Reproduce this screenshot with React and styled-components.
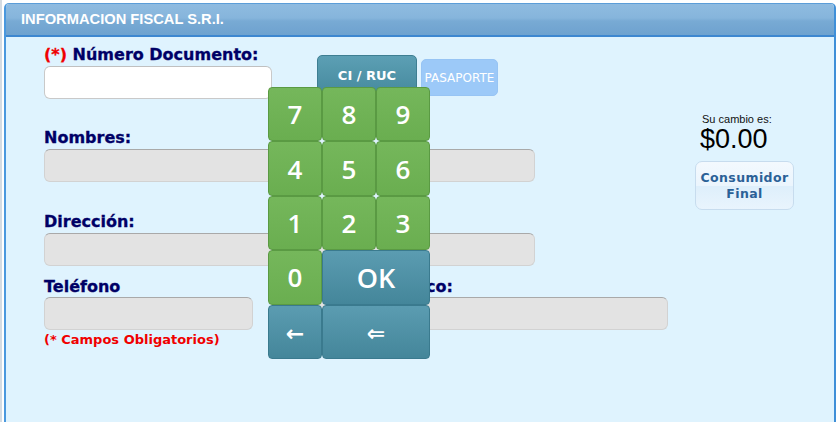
import React, { useState } from 'react'
import styled, { createGlobalStyle } from 'styled-components'

const GlobalStyle = createGlobalStyle`
	html, body {
		margin: 0;
		padding: 0;
		background: #fff;
		font-family: "DejaVu Sans", Verdana, sans-serif;
	}
	* { box-sizing: border-box; }
`

const Page = styled.div`
	min-height: 100vh;
	padding: 3px 0 0 2px;
	border-left: 2px solid #d4dbe2;
	display: flex;
`

const Panel = styled.div`
	flex: 1;
	display: flex;
	flex-direction: column;
	min-height: calc(100vh - 3px);
	background: #dff3fe;
	border: 1px solid #5b9dd8;
	border-left: 2px solid #4a98de;
	border-right: 2px solid #3f8fd8;
	border-bottom: none;
	border-radius: 5px 5px 0 0;
	overflow: hidden;
`

const Header = styled.div`
	height: 33px;
	display: flex;
	align-items: center;
	padding-left: 15px;
	background: linear-gradient(#8fbbe0 0%, #86b5dc 45%, #78aad4 55%, #6ea2cf 100%);
	border-bottom: 2px solid #3d87d0;
	color: #fff;
	font-family: "Liberation Sans", Arial, sans-serif;
	font-weight: bold;
	font-size: 14.7px;
	padding-bottom: 1px;
`

const Body = styled.div`
	position: relative;
	flex: 1;
	display: flex;
	padding-left: 38px;
`

const Form = styled.div`
	width: 624px;
	display: flex;
	flex-direction: column;
`

const Row = styled.div`
	display: flex;
	align-items: flex-start;
	margin-top: ${({ $top }) => $top}px;
`

const Field = styled.div`
	display: flex;
	flex-direction: column;
	width: ${({ $w }) => $w}px;
	margin-left: ${({ $ml }) => $ml || 0}px;
`

const Label = styled.label`
	font-size: 16px;
	line-height: 20px;
	font-weight: bold;
	color: #000066;
	margin-bottom: ${({ $mb }) => ($mb === undefined ? 1 : $mb)}px;
	white-space: nowrap;
	-webkit-text-stroke: 0.3px #000066;
	span { color: #f00000; -webkit-text-stroke: 0.3px #f00000; }
`

const Input = styled.input`
	height: 33px;
	width: 100%;
	border-radius: 6px;
	border: 1px solid ${({ $light }) => ($light ? '#c9c9c9' : '#d2d2d2')};
	border-top-color: ${({ $light }) => ($light ? '#c0c0c0' : '#a9a9a9')};
	background: ${({ $light }) => ($light ? '#fff' : '#e3e3e3')};
	outline: none;
	font-size: 14px;
	padding: 0 8px;
`

const Required = styled.div`
	margin-top: 2px;
	font-size: 13px;
	line-height: 16px;
	font-weight: bold;
	color: #f00000;
`

const DocButtons = styled.div`
	display: flex;
	align-items: flex-start;
	gap: 4px;
	margin-left: 45px;
	margin-top: 10px;
`

const DocButton = styled.button`
	font-family: "DejaVu Sans", Verdana, sans-serif;
	color: #fff;
	padding: 0;
	cursor: pointer;
	border-radius: 5px;
	${({ $active }) => $active ? `
		width: 100px;
		height: 40px;
		font-size: 13px;
		font-weight: bold;
		background: linear-gradient(#5c9fb4, #468a9e);
		border: 1px solid #3e7e92;
	` : `
		width: 77px;
		height: 37px;
		margin-top: 4px;
		font-size: 12px;
		background: #9cc9f8;
		border: 1px solid #97c4f4;
	`}
`

const Aside = styled.div`
	width: 100px;
	margin-left: 27px;
	margin-top: 76px;
	display: flex;
	flex-direction: column;
	font-family: "Liberation Sans", Arial, sans-serif;
`

const ChangeLabel = styled.div`
	font-size: 11px;
	line-height: 13px;
	padding-left: 7px;
	color: #111;
`

const ChangeValue = styled.div`
	font-size: 27px;
	line-height: 27px;
	padding-left: 5px;
	color: #000;
`

const FinalButton = styled.button`
	margin-top: 8px;
	width: 99px;
	height: 49px;
	border-radius: 7px;
	border: 1px solid #c7dcee;
	background: linear-gradient(#f3f9fe 0%, #ebf5fd 50%, #deeffb 52%, #e9f4fd 100%);
	color: #2b6197;
	font-family: "DejaVu Sans", Verdana, sans-serif;
	font-weight: bold;
	font-size: 12.5px;
	line-height: 16px;
	letter-spacing: 0.4px;
	padding: 0;
`

const Keypad = styled.div`
	position: absolute;
	left: 262px;
	top: 50px;
	display: grid;
	grid-template-columns: repeat(3, 54px);
	grid-auto-rows: 54.4px;
`

const Key = styled.button`
	grid-column: span ${({ $span }) => $span || 1};
	border-radius: 4px;
	padding: 0;
	color: #fff;
	font-family: "Open Sans", "DejaVu Sans", sans-serif;
	font-weight: 600;
	font-size: ${({ $size }) => $size || 26}px;
	cursor: pointer;
	background: ${({ $teal }) => $teal
		? 'linear-gradient(#5b9cb1, #44869a)'
		: 'linear-gradient(#75b75b, #6aae50)'};
	border: 1px solid ${({ $teal }) => ($teal ? '#3a7a8e' : '#5a9a43')};
`

const keys = [
	{ label: '7' }, { label: '8' }, { label: '9' },
	{ label: '4' }, { label: '5' }, { label: '6' },
	{ label: '1' }, { label: '2' }, { label: '3' },
	{ label: '0' }, { label: 'OK', span: 2, teal: true, size: 27 },
	{ label: '←', teal: true, size: 22 }, { label: '⇐', span: 2, teal: true, size: 22 },
]

export default () => {
	const [ doc, setDoc ] = useState('')
	const addDigit = key => {
		if ( /^\d$/.test(key) ) setDoc(doc + key)
		if ( key === '←' ) setDoc(doc.slice(0, -1))
		if ( key === '⇐' ) setDoc('')
	}
	return (
		<>
			<GlobalStyle />
			<Page>
				<Panel>
					<Header>INFORMACION FISCAL S.R.I.</Header>
					<Body>
						<Form>
							<Row $top={8}>
								<Field $w={228}>
									<Label><span>(*)</span> Número Documento:</Label>
									<Input $light value={doc} onChange={e => setDoc(e.target.value)} />
								</Field>
								<DocButtons>
									<DocButton $active>CI / RUC</DocButton>
									<DocButton>PASAPORTE</DocButton>
								</DocButtons>
							</Row>
							<Row $top={29}>
								<Field $w={491}>
									<Label>Nombres:</Label>
									<Input />
								</Field>
							</Row>
							<Row $top={30}>
								<Field $w={491}>
									<Label>Dirección:</Label>
									<Input />
								</Field>
							</Row>
							<Row $top={11}>
								<Field $w={209}>
									<Label $mb={0}>Teléfono</Label>
									<Input />
									<Required>(* Campos Obligatorios)</Required>
								</Field>
								<Field $w={388} $ml={27}>
									<Label $mb={0}>Correo Electrónico:</Label>
									<Input />
								</Field>
							</Row>
						</Form>
						<Aside>
							<ChangeLabel>Su cambio es:</ChangeLabel>
							<ChangeValue>$0.00</ChangeValue>
							<FinalButton>Consumidor<br />Final</FinalButton>
						</Aside>
						<Keypad>
							{ keys.map(k => (
								<Key key={k.label} $span={k.span} $teal={k.teal} $size={k.size} onClick={() => addDigit(k.label)}>
									{k.label}
								</Key>
							)) }
						</Keypad>
					</Body>
				</Panel>
			</Page>
		</>
	)
}
